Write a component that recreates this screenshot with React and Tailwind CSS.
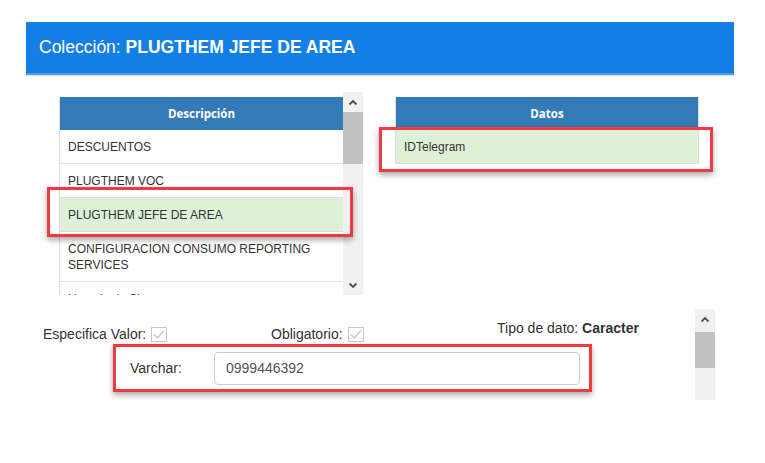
import React from 'react';

const rows = [
  { text: 'DESCUENTOS' },
  { text: 'PLUGTHEM VOC' },
  { text: 'PLUGTHEM JEFE DE AREA', active: true },
  { text: 'CONFIGURACION CONSUMO REPORTING SERVICES' },
  { text: 'Usuario de Sigma' },
];

const Chevron = ({ up }) => (
  <svg width="10" height="7" viewBox="0 0 10 7" className="block">
    <path d={up ? 'M1.5 5.5 L5 2 L8.5 5.5' : 'M1.5 1.5 L5 5 L8.5 1.5'} fill="none" stroke="#505050" strokeWidth="1.8" />
  </svg>
);

const Scrollbar = ({ thumbTop, thumbHeight, height }) => (
  <div className="w-[20px] bg-[#f1f1f1] flex flex-col items-center shrink-0" style={{ height }}>
    <div className="h-[20px] w-full flex items-center justify-center">
      <Chevron up />
    </div>
    <div className="w-full flex-1 relative">
      <div className="absolute left-0 right-0 bg-[#c1c1c1]" style={{ top: thumbTop, height: thumbHeight }}></div>
    </div>
    {height > 150 && (
      <div className="h-[20px] w-full flex items-center justify-center">
        <Chevron />
      </div>
    )}
  </div>
);

const CheckBox = () => (
  <svg width="16" height="15" viewBox="0 0 16 15" className="inline-block ml-[5px]">
    <rect x="0.5" y="0.5" width="15" height="14" fill="#fff" stroke="#c9c9c9" />
    <path d="M3 7.5 L6.5 11 L13 3.5" fill="none" stroke="#c4c4c4" strokeWidth="1.3" />
  </svg>
);

const App = () => {
  return (
    <div className="w-[765px] h-[463px] bg-white overflow-hidden font-['Liberation_Sans',Arial,sans-serif] text-[#333]">
      {/* Header */}
      <div className="pt-[22px] pl-[26px]">
        <div className="w-[708px] h-[53px] bg-[#137fe6] border-b-2 border-[#4b9cec] flex items-center pl-[13px] text-white text-[17.5px] shadow-[0_1px_1px_rgba(0,0,0,0.12)]">
          Colección:&nbsp;<span className="font-bold">PLUGTHEM JEFE DE AREA</span>
        </div>
      </div>

      {/* Tables */}
      <div className="flex mt-[17px] ml-[59px]">
        <div className="relative flex">
          <div className="w-[284px] h-[203px] overflow-hidden pt-[5px]">
            <div className="border-l border-[#ddd]">
              <div className="h-[33px] bg-[#337ab7] flex items-center justify-center text-white font-bold text-[11.5px] font-['Open_Sans',sans-serif]">
                Descripción
              </div>
              {rows.map((r) => (
                <div
                  key={r.text}
                  className={`border-b border-[#ddd] pl-[8px] pr-[6px] text-[12px] leading-[16px] flex items-center ${r.active ? 'bg-[#dff0d8]' : 'bg-white'} ${r.text.length > 30 ? 'min-h-[50px] py-[8px]' : 'h-[34px]'}`}
                >
                  {r.text}
                </div>
              ))}
            </div>
          </div>
          <Scrollbar height={203} thumbTop={0} thumbHeight={52} />
          {/* highlight */}
          <div className="absolute left-[-12px] top-[95px] w-[306px] h-[50px] border-[3px] border-[#ef3a41] shadow-[0_3px_6px_rgba(0,0,0,0.35)] pointer-events-none"></div>
        </div>

        <div className="relative ml-[32px] pt-[5px]">
          <div className="w-[304px] border-l border-r border-[#ddd]">
            <div className="h-[33px] bg-[#337ab7] flex items-center justify-center text-white font-bold text-[11.5px] font-['Open_Sans',sans-serif]">
              Datos
            </div>
            <div className="h-[34px] bg-[#dff0d8] border-b border-[#ddd] pl-[8px] flex items-center text-[12px]">
              IDTelegram
            </div>
          </div>
          <div className="absolute left-[-16px] top-[35px] w-[334px] h-[45px] border-[3px] border-[#ef3a41] shadow-[0_3px_6px_rgba(0,0,0,0.35)] pointer-events-none"></div>
        </div>
      </div>

      {/* Detail */}
      <div className="flex ml-[26px] mt-[14px]">
        <div className="w-[669px] h-[91px] overflow-hidden text-[14px]">
          <div className="flex h-[35px]">
            <div className="ml-[17px] mt-[16px] flex items-center h-[18px] w-[228px]">
              Especifica Valor:<CheckBox />
            </div>
            <div className="mt-[16px] flex items-center h-[18px] w-[226px]">
              Obligatorio:<CheckBox />
            </div>
            <div className="mt-[10px] h-[18px] flex items-center">
              Tipo de dato:&nbsp;<span className="font-bold">Caracter</span>
            </div>
          </div>
          <div className="ml-[87px] w-[479px] h-[48px] border-[3px] border-[#ef3a41] shadow-[0_3px_6px_rgba(0,0,0,0.35)] flex items-center">
            <div className="w-[98px] pl-[14px]">Varchar:</div>
            <div className="w-[366px] h-[33px] border border-[#ccc] rounded-[4px] flex items-center pl-[11px] text-[#555] bg-white">
              0999446392
            </div>
          </div>
        </div>
        <Scrollbar height={91} thumbTop={3} thumbHeight={36} />
      </div>
    </div>
  );
};

export default App;
